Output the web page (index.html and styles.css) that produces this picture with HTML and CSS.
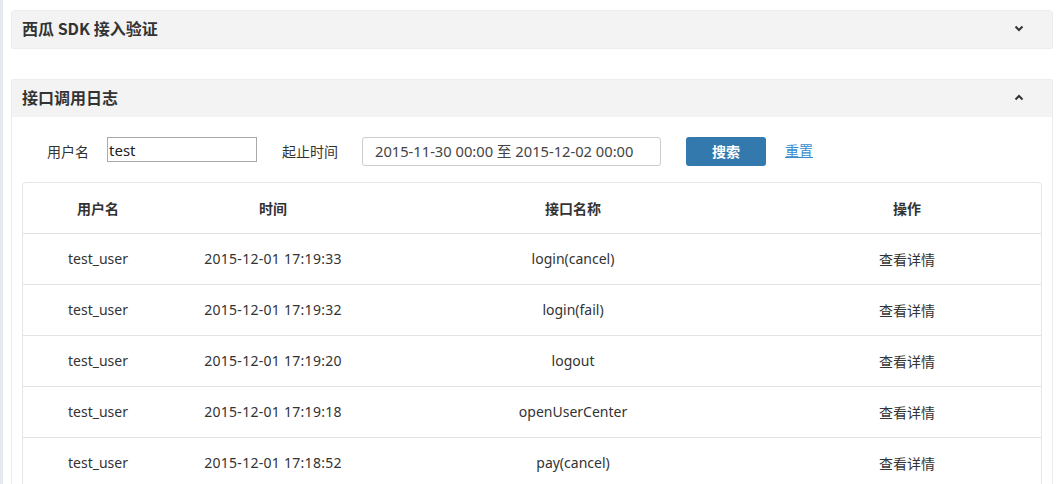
FILE: index.html
```html
<!DOCTYPE html>
<html lang="zh">
<head>
<meta charset="utf-8">
<title>SDK</title>
<link rel="stylesheet" href="styles.css">
</head>
<body>
<div class="page">
  <aside class="strip"></aside>
  <main class="content">
    <section class="panel collapsed">
      <header class="panel-head">
        <h2 class="panel-title">西瓜 SDK 接入验证</h2>
        <svg class="chev" width="10" height="7" viewBox="0 0 10 7"><path d="M1.5 1.5 L5 5 L8.5 1.5" fill="none" stroke="#333" stroke-width="2"/></svg>
      </header>
    </section>

    <section class="panel">
      <header class="panel-head">
        <h2 class="panel-title">接口调用日志</h2>
        <svg class="chev" width="10" height="7" viewBox="0 0 10 7"><path d="M1.5 5.5 L5 2 L8.5 5.5" fill="none" stroke="#333" stroke-width="2"/></svg>
      </header>
      <div class="panel-body">
        <form class="filter">
          <label class="lbl">用户名</label>
          <input class="txt" type="text" value="test">
          <label class="lbl lbl-time">起止时间</label>
          <div class="range">2015-11-30 00:00 至 2015-12-02 00:00</div>
          <button class="btn" type="button">搜索</button>
          <a class="reset" href="#">重置</a>
        </form>
        <div class="table-wrap">
          <table class="log">
            <colgroup>
              <col class="c1"><col class="c2"><col class="c3"><col class="c4">
            </colgroup>
            <thead>
              <tr><th>用户名</th><th>时间</th><th>接口名称</th><th>操作</th></tr>
            </thead>
            <tbody>
              <tr><td>test_user</td><td class="time">2015-12-01 17:19:33</td><td>login(cancel)</td><td class="op">查看详情</td></tr>
              <tr><td>test_user</td><td class="time">2015-12-01 17:19:32</td><td>login(fail)</td><td class="op">查看详情</td></tr>
              <tr><td>test_user</td><td class="time">2015-12-01 17:19:20</td><td>logout</td><td class="op">查看详情</td></tr>
              <tr><td>test_user</td><td class="time">2015-12-01 17:19:18</td><td>openUserCenter</td><td class="op">查看详情</td></tr>
              <tr><td>test_user</td><td class="time">2015-12-01 17:18:52</td><td>pay(cancel)</td><td class="op">查看详情</td></tr>
            </tbody>
          </table>
        </div>
      </div>
    </section>
  </main>
</div>
</body>
</html>
```
FILE: styles.css
```css
* { box-sizing: border-box; }
html, body { margin: 0; padding: 0; background: #fff; }
body {
  font-family: "Noto Sans", "Noto Sans CJK SC", sans-serif;
  color: #333;
  font-size: 14px;
  overflow: hidden;
  height: 484px;
}
.page { display: flex; height: 484px; }
.strip { width: 3px; background: #e6e9ee; flex: none; }
.content { flex: 1; padding: 10px 7px 0 8px; }
.panel {
  border: 1px solid #ececec;
  border-radius: 3px;
  margin-bottom: 30px;
}
.panel-head {
  height: 37px;
  background: #f3f3f3;
  display: flex;
  align-items: center;
  justify-content: space-between;
  padding: 0 28px 3px 10px;
}
.panel-title {
  margin: 0;
  font-size: 16px;
  font-weight: 700;
  color: #333;
  font-family: "Noto Sans CJK SC", sans-serif;
  line-height: 20px;
}
.chev { display: block; }
.panel-body { padding: 19px 10px 0 10px; }
.filter {
  display: flex;
  align-items: center;
  height: 30px;
  padding-left: 25px;
  margin-bottom: 16px;
}
.lbl { font-size: 14px; font-family: "Noto Sans CJK SC", sans-serif; margin-right: 18px; }
.lbl-time { margin-left: 25px; margin-right: 24px; }
.txt {
  width: 150px;
  height: 25px;
  border: 1px solid #a9a9a9;
  padding: 0 1px;
  font: 15px "Noto Sans", sans-serif;
  color: #222;
  margin-top: -3px;
}
.range {
  width: 299px;
  height: 29px;
  border: 1px solid #ccc;
  border-radius: 3px;
  padding: 0 12px;
  line-height: 27px;
  font-size: 14.7px;
  color: #444;
}
.btn {
  margin-left: 25px;
  width: 80px;
  height: 29px;
  border: 0;
  border-radius: 3px;
  background: #3379ae;
  color: #fff;
  font: 700 14px "Noto Sans CJK SC", sans-serif;
}
.reset {
  margin-left: 19px;
  color: #3a8ccf;
  font-size: 14px;
  text-decoration: underline;
  margin-top: -3px;
}
.table-wrap {
  border: 1px solid #e6e6e6;
  border-radius: 4px;
  overflow: hidden;
  height: 310px;
}
.log {
  width: 100%;
  border-collapse: collapse;
  table-layout: fixed;
}
.c1 { width: 150px; }
.c2 { width: 200px; }
.c3 { width: 400px; }
.log th, .log td {
  height: 51px;
  text-align: center;
  padding: 0;
  font-size: 14px;
  color: #333;
  border-top: 1px solid #e3e3e3;
}
.log thead th { border-top: 0; height: 50px; font-weight: 700; font-family: "Noto Sans CJK SC", sans-serif; }
.log td.time { letter-spacing: 0.28px; }
.log td.op { font-family: "Noto Sans CJK SC", sans-serif; }
```
